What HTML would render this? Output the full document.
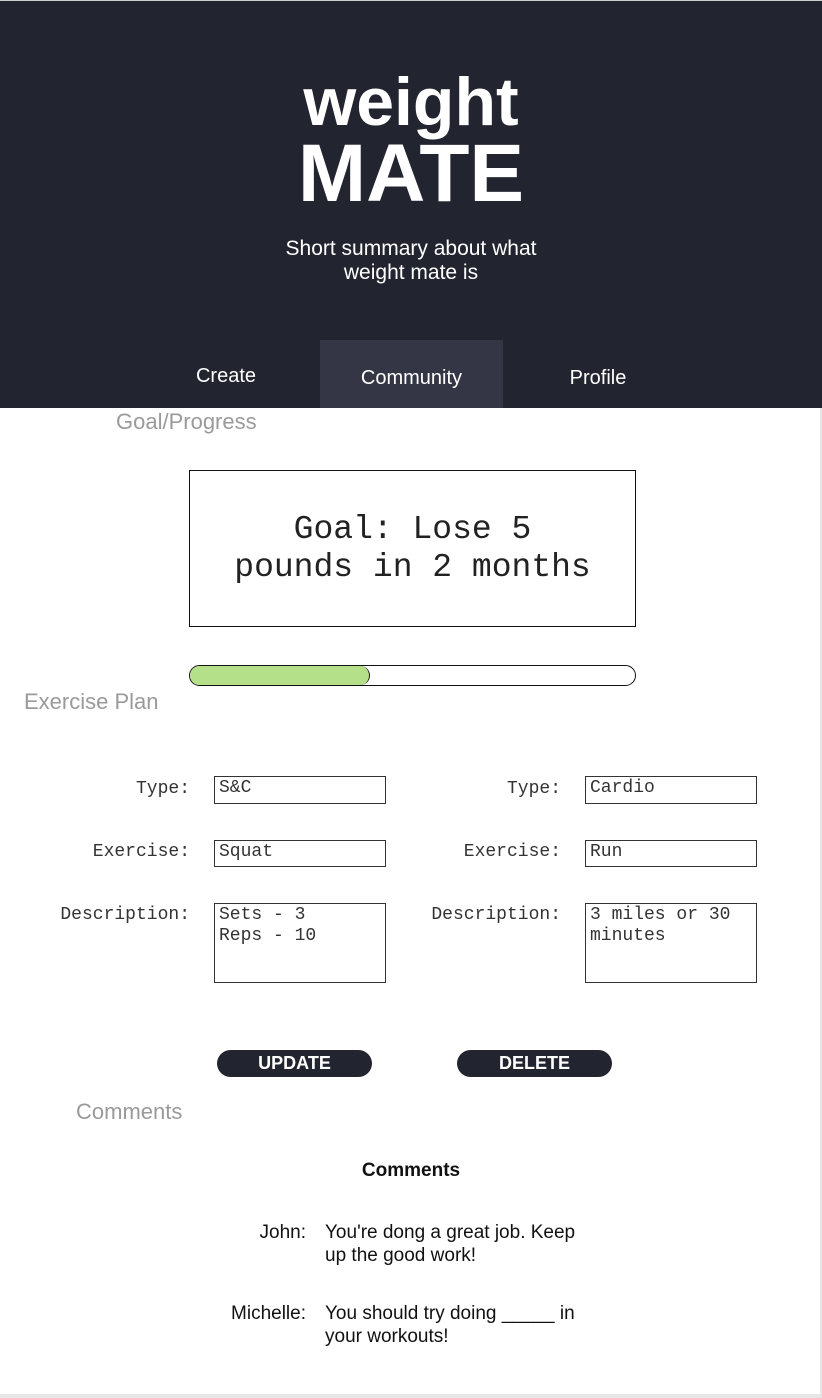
<!DOCTYPE html>
<html><head><meta charset="utf-8"><style>
*{margin:0;padding:0;box-sizing:border-box}
body{width:822px;height:1398px;position:relative;background:#fff;font-family:"Liberation Sans",sans-serif;overflow:hidden}
.a{position:absolute}
.hdr{left:0;top:0;width:822px;height:408px;background:#22242f;border-top:1px solid #ccc}
.nav{color:#fff;font-size:20px;text-align:center}
.mono{font-family:"Liberation Mono",monospace}
.lab{font-size:18px;color:#333;text-align:right;width:150px}
.box{border:1px solid #333;font-size:18px;padding:1px 4px;line-height:21px;color:#333;white-space:nowrap}
.sec{color:#9a9a9a;font-size:22px}
.btn{background:#22242f;color:#fff;font-weight:bold;font-size:18px;text-align:center;border-radius:14px;height:27px;line-height:27px;width:155px}
.cm{font-size:19px;color:#111;line-height:23px}
</style></head><body>
<div class="a hdr"></div>
<div class="a" style="left:0;top:62px;width:822px;text-align:center;color:#fff;font-weight:bold;font-size:68px;line-height:80px">weight</div>
<div class="a" style="left:0;top:131px;width:822px;text-align:center;color:#fff;font-weight:bold;font-size:82px;line-height:86px">MATE</div>
<div class="a" style="left:0;top:237px;width:822px;text-align:center;color:#fff;font-size:21px;line-height:24px">Short summary about what<br>weight mate is</div>
<div class="a" style="left:320px;top:340px;width:183px;height:68px;background:#343646"></div>
<div class="a nav" style="left:166px;top:365px;width:120px">Create</div>
<div class="a nav" style="left:320px;top:367px;width:183px">Community</div>
<div class="a nav" style="left:538px;top:367px;width:120px">Profile</div>
<div class="a sec" style="left:116px;top:409px">Goal/Progress</div>
<div class="a mono" style="left:189px;top:470px;width:447px;height:157px;border:1.5px solid #111;text-align:center;font-size:33px;line-height:38px;padding-top:40px;color:#222;white-space:nowrap">Goal: Lose 5<br>pounds in 2 months</div>
<div class="a" style="left:189px;top:665px;width:447px;height:21px;border:1.5px solid #111;border-radius:11px;overflow:hidden"><div style="width:180px;height:100%;background:#b5e08a;border-right:1.5px solid #111;border-radius:0 10px 10px 0"></div></div>
<div class="a sec" style="left:24px;top:689px">Exercise Plan</div>
<div class="a mono lab" style="left:40px;top:779px">Type:</div>
<div class="a mono lab" style="left:40px;top:842px">Exercise:</div>
<div class="a mono lab" style="left:40px;top:905px">Description:</div>
<div class="a mono box" style="left:214px;top:776px;width:172px;height:28px">S&amp;C</div>
<div class="a mono box" style="left:214px;top:840px;width:172px;height:27px">Squat</div>
<div class="a mono box" style="left:214px;top:903px;width:172px;height:80px">Sets - 3<br>Reps - 10</div>
<div class="a mono lab" style="left:411px;top:779px">Type:</div>
<div class="a mono lab" style="left:411px;top:842px">Exercise:</div>
<div class="a mono lab" style="left:411px;top:905px">Description:</div>
<div class="a mono box" style="left:585px;top:776px;width:172px;height:28px">Cardio</div>
<div class="a mono box" style="left:585px;top:840px;width:172px;height:27px">Run</div>
<div class="a mono box" style="left:585px;top:903px;width:172px;height:80px">3 miles or 30<br>minutes</div>
<div class="a btn" style="left:217px;top:1050px">UPDATE</div>
<div class="a btn" style="left:457px;top:1050px">DELETE</div>
<div class="a sec" style="left:76px;top:1099px">Comments</div>
<div class="a" style="left:0;top:1160px;width:822px;text-align:center;font-weight:bold;font-size:19px;color:#111">Comments</div>
<div class="a cm" style="left:200px;top:1221px;width:106px;text-align:right">John:</div>
<div class="a cm" style="left:325px;top:1221px;width:275px">You're dong a great job. Keep up the good work!</div>
<div class="a cm" style="left:200px;top:1302px;width:106px;text-align:right">Michelle:</div>
<div class="a cm" style="left:325px;top:1302px;width:275px">You should try doing _____ in your workouts!</div>
<div class="a" style="left:0;top:1394px;width:822px;height:4px;background:#e6e6e6"></div>
<div class="a" style="left:820px;top:408px;width:2px;height:990px;background:#e6e6e6"></div>
</body></html>
